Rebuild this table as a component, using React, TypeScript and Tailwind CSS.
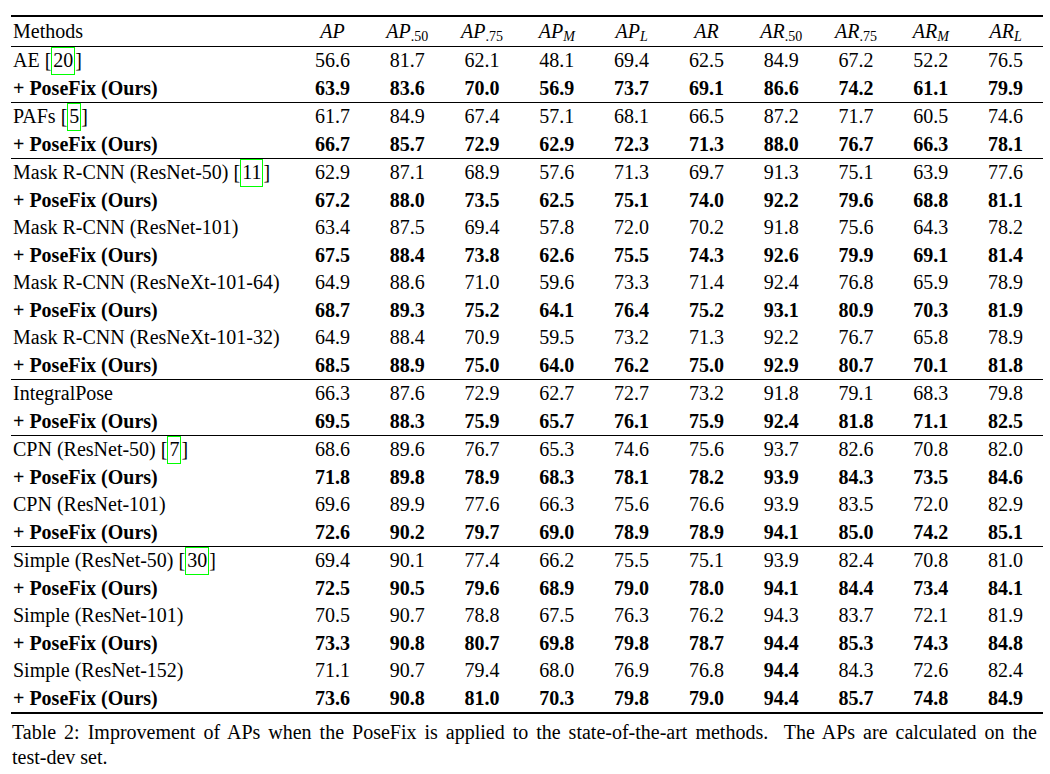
type Row = {
  method: string;
  cite?: string;
  values: string[];
  ours?: boolean;
  bold?: number[];
};

const groups: Row[][] = [
  [
    { method: "AE", cite: "20", values: ["56.6", "81.7", "62.1", "48.1", "69.4", "62.5", "84.9", "67.2", "52.2", "76.5"] },
    { method: "+ PoseFix (Ours)", ours: true, values: ["63.9", "83.6", "70.0", "56.9", "73.7", "69.1", "86.6", "74.2", "61.1", "79.9"] },
  ],
  [
    { method: "PAFs", cite: "5", values: ["61.7", "84.9", "67.4", "57.1", "68.1", "66.5", "87.2", "71.7", "60.5", "74.6"] },
    { method: "+ PoseFix (Ours)", ours: true, values: ["66.7", "85.7", "72.9", "62.9", "72.3", "71.3", "88.0", "76.7", "66.3", "78.1"] },
  ],
  [
    { method: "Mask R-CNN (ResNet-50)", cite: "11", values: ["62.9", "87.1", "68.9", "57.6", "71.3", "69.7", "91.3", "75.1", "63.9", "77.6"] },
    { method: "+ PoseFix (Ours)", ours: true, values: ["67.2", "88.0", "73.5", "62.5", "75.1", "74.0", "92.2", "79.6", "68.8", "81.1"] },
    { method: "Mask R-CNN (ResNet-101)", values: ["63.4", "87.5", "69.4", "57.8", "72.0", "70.2", "91.8", "75.6", "64.3", "78.2"] },
    { method: "+ PoseFix (Ours)", ours: true, values: ["67.5", "88.4", "73.8", "62.6", "75.5", "74.3", "92.6", "79.9", "69.1", "81.4"] },
    { method: "Mask R-CNN (ResNeXt-101-64)", values: ["64.9", "88.6", "71.0", "59.6", "73.3", "71.4", "92.4", "76.8", "65.9", "78.9"] },
    { method: "+ PoseFix (Ours)", ours: true, values: ["68.7", "89.3", "75.2", "64.1", "76.4", "75.2", "93.1", "80.9", "70.3", "81.9"] },
    { method: "Mask R-CNN (ResNeXt-101-32)", values: ["64.9", "88.4", "70.9", "59.5", "73.2", "71.3", "92.2", "76.7", "65.8", "78.9"] },
    { method: "+ PoseFix (Ours)", ours: true, values: ["68.5", "88.9", "75.0", "64.0", "76.2", "75.0", "92.9", "80.7", "70.1", "81.8"] },
  ],
  [
    { method: "IntegralPose", values: ["66.3", "87.6", "72.9", "62.7", "72.7", "73.2", "91.8", "79.1", "68.3", "79.8"] },
    { method: "+ PoseFix (Ours)", ours: true, values: ["69.5", "88.3", "75.9", "65.7", "76.1", "75.9", "92.4", "81.8", "71.1", "82.5"] },
  ],
  [
    { method: "CPN (ResNet-50)", cite: "7", values: ["68.6", "89.6", "76.7", "65.3", "74.6", "75.6", "93.7", "82.6", "70.8", "82.0"] },
    { method: "+ PoseFix (Ours)", ours: true, values: ["71.8", "89.8", "78.9", "68.3", "78.1", "78.2", "93.9", "84.3", "73.5", "84.6"] },
    { method: "CPN (ResNet-101)", values: ["69.6", "89.9", "77.6", "66.3", "75.6", "76.6", "93.9", "83.5", "72.0", "82.9"] },
    { method: "+ PoseFix (Ours)", ours: true, values: ["72.6", "90.2", "79.7", "69.0", "78.9", "78.9", "94.1", "85.0", "74.2", "85.1"] },
  ],
  [
    { method: "Simple (ResNet-50)", cite: "30", values: ["69.4", "90.1", "77.4", "66.2", "75.5", "75.1", "93.9", "82.4", "70.8", "81.0"] },
    { method: "+ PoseFix (Ours)", ours: true, values: ["72.5", "90.5", "79.6", "68.9", "79.0", "78.0", "94.1", "84.4", "73.4", "84.1"] },
    { method: "Simple (ResNet-101)", values: ["70.5", "90.7", "78.8", "67.5", "76.3", "76.2", "94.3", "83.7", "72.1", "81.9"] },
    { method: "+ PoseFix (Ours)", ours: true, values: ["73.3", "90.8", "80.7", "69.8", "79.8", "78.7", "94.4", "85.3", "74.3", "84.8"] },
    { method: "Simple (ResNet-152)", bold: [6], values: ["71.1", "90.7", "79.4", "68.0", "76.9", "76.8", "94.4", "84.3", "72.6", "82.4"] },
    { method: "+ PoseFix (Ours)", ours: true, values: ["73.6", "90.8", "81.0", "70.3", "79.8", "79.0", "94.4", "85.7", "74.8", "84.9"] },
  ],
];

const headers: { base: string; sub?: string; subItalic?: boolean }[] = [
  { base: "AP" },
  { base: "AP", sub: ".50" },
  { base: "AP", sub: ".75" },
  { base: "AP", sub: "M", subItalic: true },
  { base: "AP", sub: "L", subItalic: true },
  { base: "AR" },
  { base: "AR", sub: ".50" },
  { base: "AR", sub: ".75" },
  { base: "AR", sub: "M", subItalic: true },
  { base: "AR", sub: "L", subItalic: true },
];

const grid = "grid grid-cols-[284px_repeat(10,minmax(0,1fr))]";

function DataRow({ row }: { row: Row }) {
  return (
    <div className={`${grid} h-[27.5px] leading-[27.5px]`}>
      <div className={`pl-[2px] whitespace-nowrap ${row.ours ? "font-bold" : ""}`}>
        {row.method}
        {row.cite && (
          <>
            {" ["}
            <span className="inline-block align-top border border-[#00ff00] px-px leading-[25.5px]">
              {row.cite}
            </span>
            {"]"}
          </>
        )}
      </div>
      {row.values.map((v, i) => (
        <div
          key={i}
          className={`text-center ${row.ours || row.bold?.includes(i) ? "font-bold" : ""}`}
        >
          {v}
        </div>
      ))}
    </div>
  );
}

export default function App() {
  return (
    <div className="w-[1050px] h-[774px] bg-white text-black font-['Liberation_Serif',serif] text-[20px] overflow-hidden">
      <div className="ml-[11px] w-[1032px] pt-[15px]">
        {/* top rule */}
        <div className="h-[2px] bg-black" />
        <div className={`${grid} h-[29px] leading-[29px]`}>
          <div className="pl-[2px]">Methods</div>
          {headers.map((h, i) => (
            <div key={i} className="text-center whitespace-nowrap">
              <span className="italic">{h.base}</span>
              {h.sub && (
                <span
                  className={`text-[14px] relative top-[3px] ${h.subItalic ? "italic" : ""}`}
                >
                  {h.sub}
                </span>
              )}
            </div>
          ))}
        </div>
        <div className="h-px bg-black" />
        {groups.map((g, gi) => (
          <div key={gi}>
            {gi > 0 && <div className="h-px bg-black" />}
            {g.map((r, ri) => (
              <DataRow key={ri} row={r} />
            ))}
          </div>
        ))}
        {/* bottom rule */}
        <div className="h-[2px] bg-black" />
        <div className="mt-[6px] pl-px pr-[6px] leading-[25px]">
          <div className="text-justify [text-align-last:justify] whitespace-nowrap">
            Table 2: Improvement of APs when the PoseFix is applied to the state-of-the-art methods.&nbsp; The APs are calculated on the
          </div>
          <div>test-dev set.</div>
        </div>
      </div>
    </div>
  );
}
